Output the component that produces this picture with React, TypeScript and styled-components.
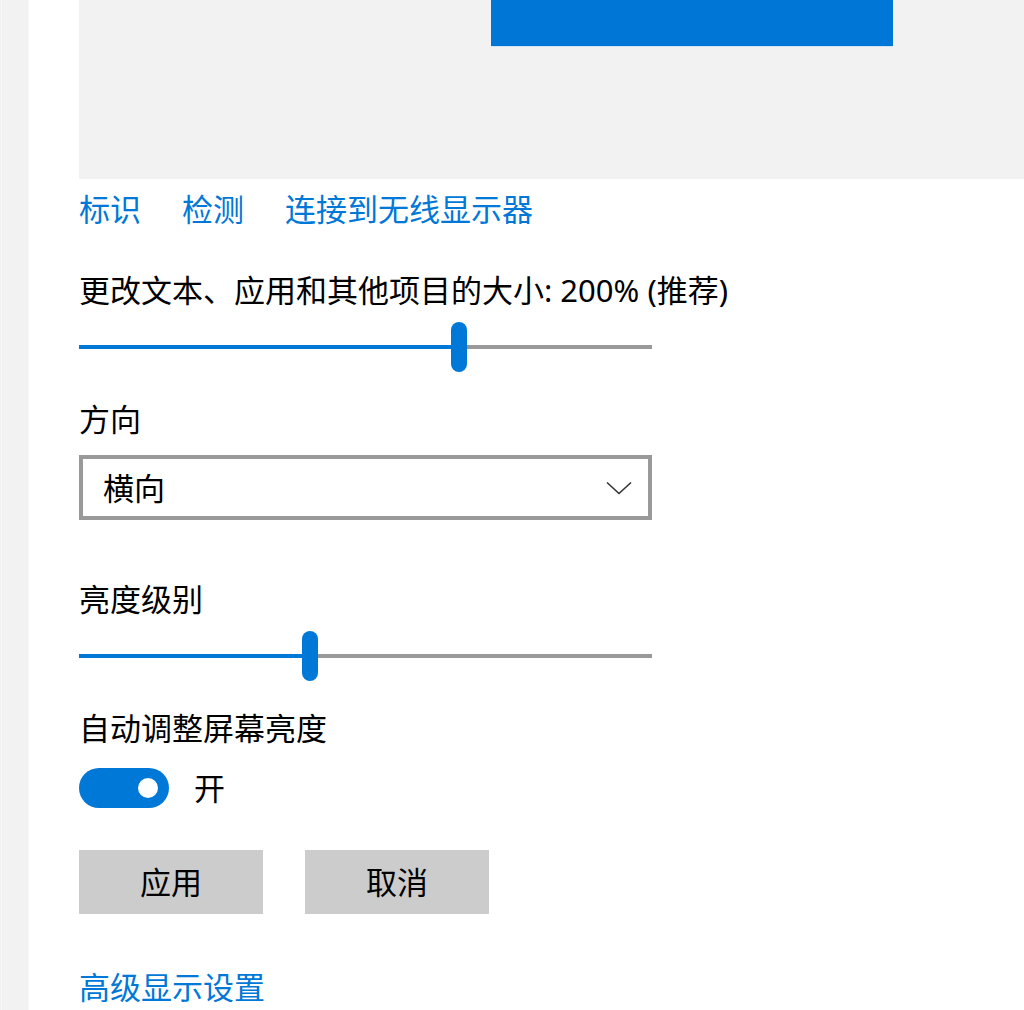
import React from 'react';
import styled, { createGlobalStyle } from 'styled-components';

const GlobalStyle = createGlobalStyle`
  html, body {
    margin: 0;
    padding: 0;
    background: #ffffff;
  }

  body {
    font-family: 'Noto Sans', 'Noto Sans CJK SC', sans-serif;
    color: #000000;
  }
`;

const Shell = styled.div`
  display: flex;
  width: 1024px;
  height: 1010px;
  overflow: hidden;
`;

const Strip = styled.div`
  flex: 0 0 29px;
  background: linear-gradient(
    to right,
    #f2f2f2 0 1px,
    #f8f8f8 1px 2px,
    #f2f2f2 2px 28px,
    #f7f7f7 28px 29px
  );
`;

const Content = styled.main`
  flex: 1;
  display: flex;
  flex-direction: column;
  margin-left: 50px;
  font-size: 31px;
  line-height: 40px;
`;

const Preview = styled.div`
  position: relative;
  height: 179px;
  background: #f2f2f2;
`;

const Monitor = styled.div`
  position: absolute;
  top: 0;
  left: 412px;
  width: 402px;
  height: 46px;
  background: #0076d6;
  box-shadow: 0 1px 0 #cfe3f5;
`;

const LinkRow = styled.nav`
  display: flex;
  gap: 41px;
  margin-top: 10px;
`;

const Link = styled.a`
  color: #0078d7;
  text-decoration: none;
  cursor: pointer;
`;

const Label = styled.div<{ $gap: number }>`
  margin-top: ${({ $gap }) => $gap}px;
  white-space: nowrap;
`;

const SliderBox = styled.div`
  display: flex;
  align-items: center;
  width: 573px;
  height: 50px;
  margin-top: 12px;
`;

const Track = styled.div<{ $filled?: boolean }>`
  height: 4px;
  background: ${({ $filled }) => ($filled ? '#0078d7' : '#999999')};
  flex: ${({ $filled }) => ($filled ? '0 0 auto' : '1')};
`;

const Thumb = styled.div`
  flex: 0 0 16px;
  height: 50px;
  border-radius: 8px;
  background: #0078d7;
`;

const Slider = ({ value }: { value: number }) => (
  <SliderBox>
    <Track $filled style={{ width: Math.round(value * (573 - 16)) }} />
    <Thumb />
    <Track />
  </SliderBox>
);

const Select = styled.div`
  box-sizing: border-box;
  display: flex;
  align-items: center;
  justify-content: space-between;
  width: 573px;
  height: 65px;
  margin-top: 16px;
  padding: 0 16px 0 20px;
  border: 4px solid #999999;
  background: #ffffff;
`;

const Chevron = () => (
  <svg width="26" height="14" viewBox="0 0 26 14" fill="none">
    <path d="M1 1.5 L13 12.5 L25 1.5" stroke="#333333" strokeWidth="1.6" />
  </svg>
);

const ToggleRow = styled.div`
  display: flex;
  align-items: center;
  gap: 25px;
  margin-top: 20px;
  height: 40px;
`;

const Toggle = styled.div<{ $on: boolean }>`
  box-sizing: border-box;
  display: flex;
  align-items: center;
  justify-content: ${({ $on }) => ($on ? 'flex-end' : 'flex-start')};
  width: 90px;
  height: 40px;
  padding: 0 11px;
  border-radius: 20px;
  background: ${({ $on }) => ($on ? '#0078d7' : '#ffffff')};
`;

const Knob = styled.span`
  width: 20px;
  height: 20px;
  border-radius: 50%;
  background: #ffffff;
`;

const ButtonRow = styled.div`
  display: flex;
  gap: 42px;
  margin-top: 42px;
`;

const Button = styled.button`
  width: 184px;
  height: 64px;
  border: none;
  background: #cccccc;
  font: inherit;
  color: #000000;
  padding: 0;
`;

const FooterLink = styled(Link)`
  margin-top: 53px;
`;

export default function App() {
  return (
    <>
      <GlobalStyle />
      <Shell>
        <Strip />
        <Content>
          <Preview>
            <Monitor />
          </Preview>

          <LinkRow>
            <Link>标识</Link>
            <Link>检测</Link>
            <Link>连接到无线显示器</Link>
          </LinkRow>

          <Label $gap={41}>更改文本、应用和其他项目的大小: 200% (推荐)</Label>
          <Slider value={0.668} />

          <Label $gap={27}>方向</Label>
          <Select>
            <span>横向</span>
            <Chevron />
          </Select>

          <Label $gap={59}>亮度级别</Label>
          <Slider value={0.4} />

          <Label $gap={27}>自动调整屏幕亮度</Label>
          <ToggleRow>
            <Toggle $on>
              <Knob />
            </Toggle>
            <span>开</span>
          </ToggleRow>

          <ButtonRow>
            <Button>应用</Button>
            <Button>取消</Button>
          </ButtonRow>

          <FooterLink>高级显示设置</FooterLink>
        </Content>
      </Shell>
    </>
  );
}
